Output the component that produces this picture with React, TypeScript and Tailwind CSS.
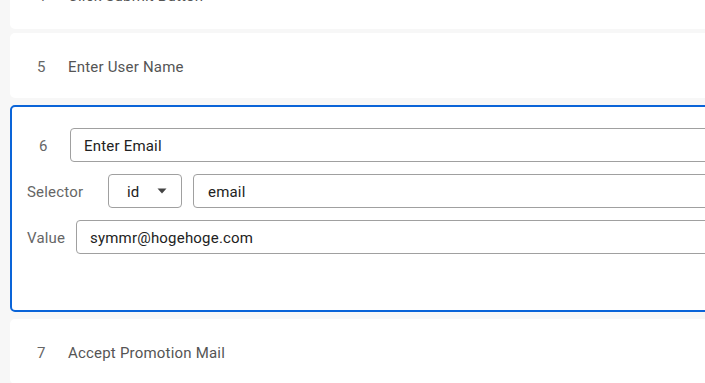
import { useState } from 'react';

interface Step {
  no: number;
  title: string;
}

const font = { fontFamily: 'Roboto, "Liberation Sans", sans-serif' };

function StepRow({ step, className = '' }: { step: Step; className?: string }) {
  return (
    <div className={`h-[65px] bg-white rounded-[5px] flex items-center tracking-[0.2px] ${className}`}>
      <span className="w-[58px] pl-[27px] text-[15px] text-[#666]">{step.no}</span>
      <span className="text-[15px] text-[#555]">{step.title}</span>
    </div>
  );
}

export default function App() {
  const [title, setTitle] = useState('Enter Email');
  const [selector, setSelector] = useState('email');
  const [value, setValue] = useState('symmr@hogehoge.com');

  return (
    <div className="w-[705px] h-[383px] overflow-hidden bg-[#f7f7f7] tracking-[0.2px]" style={font}>
      <div className="w-[760px] pl-[10px] flex flex-col">
        <StepRow step={{ no: 4, title: 'Click Submit Button' }} className="-mt-[36px] pt-[0px]" />
        <StepRow step={{ no: 5, title: 'Enter User Name' }} className="mt-[4px] pt-[4px]" />

        <div className="mt-[7px] h-[207px] bg-white rounded-[5px] border-2 border-[#0a64d8] pt-[21px] pl-[15px] flex flex-col gap-[12px]">
          <div className="flex items-center">
            <span className="w-[43px] pl-[12px] pt-[2px] text-[15px] text-[#666]">6</span>
            <input
              value={title}
              onChange={(e) => setTitle(e.target.value)}
              className="flex-1 h-[34px] px-[13px] pt-[2px] border border-[#a0a0a0] rounded-[4px] text-[15px] text-[#222] outline-none"
            />
          </div>

          <div className="flex items-center">
            <span className="w-[81px] pt-[3px] text-[15px] text-[#666]">Selector</span>
            <div className="w-[74px] h-[34px] border border-[#a0a0a0] rounded-[4px] flex items-center pl-[18px] pr-[14px] justify-between">
              <span className="pt-[2px] text-[15px] text-[#222]">id</span>
              <svg width="10" height="6" viewBox="0 0 10 6">
                <path d="M0.5 0.5 L9.5 0.5 L5 5.5 Z" fill="#444" />
              </svg>
            </div>
            <input
              value={selector}
              onChange={(e) => setSelector(e.target.value)}
              className="ml-[11px] flex-1 h-[34px] px-[14px] pt-[2px] border border-[#a0a0a0] rounded-[4px] text-[15px] text-[#222] outline-none"
            />
          </div>

          <div className="flex items-center">
            <span className="w-[49px] pt-[2px] text-[15px] text-[#666]">Value</span>
            <input
              value={value}
              onChange={(e) => setValue(e.target.value)}
              className="flex-1 h-[34px] px-[13px] pt-[2px] border border-[#a0a0a0] rounded-[4px] text-[15px] text-[#222] outline-none"
            />
          </div>
        </div>

        <StepRow step={{ no: 7, title: 'Accept Promotion Mail' }} className="mt-[7px] pt-[4px]" />
      </div>
    </div>
  );
}
